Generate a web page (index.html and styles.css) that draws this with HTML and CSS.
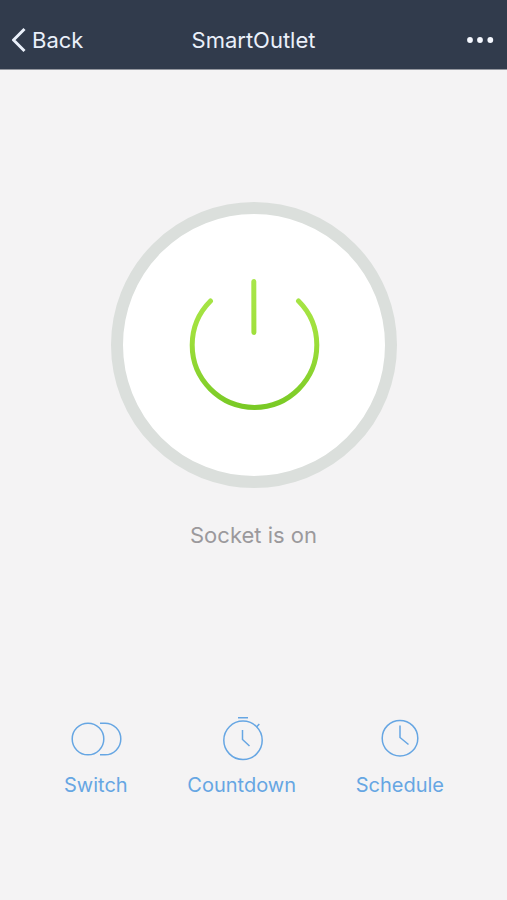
FILE: index.html
```html
<!DOCTYPE html>
<html lang="en">
<head>
<meta charset="utf-8">
<meta name="viewport" content="width=device-width, initial-scale=1">
<title>SmartOutlet</title>
<link rel="stylesheet" href="styles.css">
</head>
<body>
<header class="bar">
  <a class="back" href="#">
    <svg width="16" height="26" viewBox="0 0 16 26" aria-hidden="true"><path d="M12.500 2 1.500 13 12.500 24"/></svg>
    <span>Back</span>
  </a>
  <h1 class="title">SmartOutlet</h1>
  <button class="more" type="button" aria-label="More">
    <svg width="28" height="8" viewBox="0 0 28 8" aria-hidden="true"><circle cx="3" cy="4" r="2.9"/><circle cx="13" cy="4" r="2.9"/><circle cx="23.300" cy="4" r="2.9"/></svg>
  </button>
</header>
<main class="screen">
  <button class="power" type="button" aria-label="Power">
    <svg width="140" height="140" viewBox="0 0 140 140" aria-hidden="true">
      <defs>
        <linearGradient id="glow" gradientUnits="userSpaceOnUse" x1="0" y1="5" x2="0" y2="135">
          <stop offset="0" stop-color="#a8e64a"/>
          <stop offset="0.4" stop-color="#a0e03c"/>
          <stop offset="1" stop-color="#78c924"/>
        </linearGradient>
      </defs>
      <path d="M26.500 26A62.300 62.300 0 1 0 114.500 26M69.800 6.500 L69.900 57.500"/>
    </svg>
  </button>
  <p class="status">Socket is on</p>
  <nav class="actions">
    <a class="action" href="#">
      <svg width="52" height="48" viewBox="0 0 52 48" aria-hidden="true"><circle cx="18" cy="24" r="15.800"/><path d="M30 8.200h5a15.800 15.800 0 0 1 0 31.600h-5"/></svg>
      <span>Switch</span>
    </a>
    <a class="action" href="#">
      <svg width="52" height="48" viewBox="0 0 52 48" aria-hidden="true"><circle cx="27" cy="25.300" r="19.200"/><path d="M22 2.800h10M40.500 12l2.800-3M26.500 15v9.500l7 6.500"/></svg>
      <span>Countdown</span>
    </a>
    <a class="action" href="#">
      <svg width="52" height="48" viewBox="0 0 52 48" aria-hidden="true"><circle cx="26" cy="23.200" r="17.800"/><path d="M26 10.500v12l8.500 7"/></svg>
      <span>Schedule</span>
    </a>
  </nav>
</main>
</body>
</html>
```
FILE: styles.css
```css
* {
  box-sizing: border-box;
}

body {
  margin: 0;
  min-height: 100vh;
  display: flex;
  flex-direction: column;
  background: #f4f3f4;
  font-family: Inter, "Liberation Sans", sans-serif;
}

button {
  border: 0;
  padding: 0;
  background: none;
  cursor: pointer;
}

a {
  color: inherit;
  text-decoration: none;
}

svg {
  display: block;
  fill: none;
  stroke: currentColor;
}

.bar {
  display: grid;
  grid-template-columns: 1fr auto 1fr;
  align-items: center;
  padding: 10px 12px 0;
  height: 70px;
  border-bottom: 1px solid #94979f;
  background: #313b4c;
  color: #eaf0fa;
  font-size: 22px;
  line-height: 28px;
}

.back {
  display: flex;
  align-items: center;
  gap: 4px;
}

.back svg {
  stroke-width: 3;
}

.title {
  margin: 0;
  font-size: 22px;
  font-weight: 400;
}

.more {
  justify-self: end;
  color: #f5f8ff;
}

.more svg {
  fill: currentColor;
  stroke: none;
}

.screen {
  flex: 1;
  display: flex;
  flex-direction: column;
  align-items: center;
  padding: 132px 64px 103px;
}

.power {
  display: grid;
  place-items: center;
  width: 286px;
  height: 286px;
  border: 12px solid #dbdfdc;
  border-radius: 50%;
  background: #fff;
}

.power svg {
  stroke: url(#glow);
  stroke-width: 5;
  stroke-linecap: round;
}

.status {
  margin: 33px 0 0;
  color: #9b999c;
  font-size: 22px;
  line-height: 28px;
}

.actions {
  display: flex;
  justify-content: space-between;
  align-self: stretch;
  margin: auto -1px 0 0;
  color: #66a6e3;
}

.action {
  display: flex;
  flex-direction: column;
  align-items: center;
  gap: 10px;
  font-size: 20px;
  line-height: 24px;
}

.action svg {
  stroke-width: 1.5;
}
```
